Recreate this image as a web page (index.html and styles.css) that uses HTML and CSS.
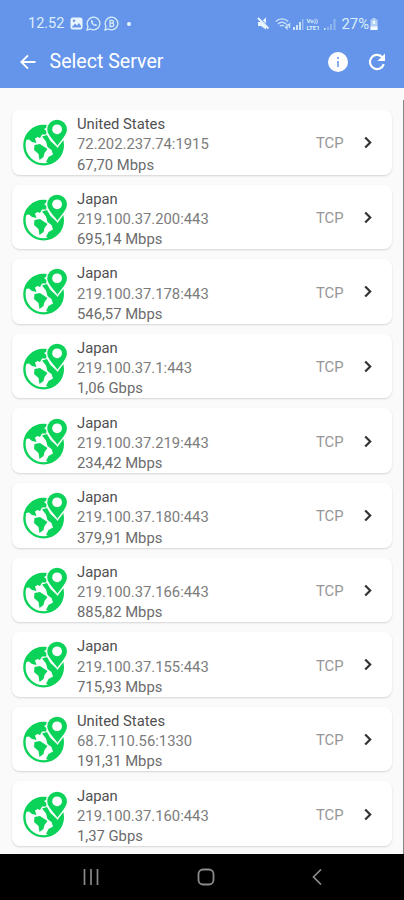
FILE: index.html
```html
<!DOCTYPE html>
<html lang="en">
<head>
    <title>Select Server</title>
    <meta charset="utf-8" />
    <meta name="viewport" content="width=device-width, initial-scale=1" />
    <link rel="stylesheet" href="styles.css">
</head>
<body>
    <svg class="sprite" width="0" height="0">
        <symbol id="globe" viewBox="0 0 46 48">
            <circle cx="21.600" cy="27.200" r="19.200" fill="#fff" stroke="#0bd258" stroke-width="2.400" />
            <path fill="#0bd258" d="M3 22C7 11 14 7.500 23 7.500L26 9L22 11L25 13.500L24 16.500L20 16.500L18 20L15.500 19L13 20.500L14.500 25L10 24L7 21.500Z" />
            <path fill="#0bd258" d="M12.500 27L18 26L25.500 31L22.500 35L21.500 39L17.500 42L16.500 36L12 32Z" />
            <path fill="#0bd258" d="M20 18.500L25 17L28.500 23L34 28L40.500 22C42 33 37 43 28.500 46L24 44L26.500 39L31 36.500L29.500 32L25.500 29L24 23.500Z" />
            <path fill="#0bd258" stroke="#fff" stroke-width="1.300" d="M35.500 28.800C31.500 22.500 24.600 18 24.600 11.500A10.500 10.500 0 0 1 45.600 11.500C45.600 18 39.500 22.500 35.500 28.800Z" />
            <circle cx="35.100" cy="11.300" r="4.900" fill="#fff" />
        </symbol>
        <symbol id="chevron" viewBox="0 0 10 14">
            <path fill="none" stroke="#333" stroke-width="2.200" d="M2.200 2.500L7.200 7.500L2.200 12.500" />
        </symbol>
    </svg>
    <div class="container">
        <header>
            <div class="status-bar">
                <span class="time">12.52</span>
                <svg width="13" height="13" viewBox="0 0 13 13">
                    <rect x="0.500" y="0.500" width="12" height="12" rx="2.500" fill="#e8f5ff" />
                    <path fill="#6b98e6" d="M2 10L5 6.500L7 8.500L9 6L11 9V10.500H2Z" />
                    <circle cx="4" cy="3.800" r="1.200" fill="#6b98e6" />
                </svg>
                <svg width="15" height="15" viewBox="0 0 15 15" fill="none" stroke="#d6ecf8" stroke-width="1.300">
                    <path d="M1 14L2 10.500A6.300 6.300 0 1 1 4.500 13Z" />
                    <path d="M5 4.500C4.500 7.500 7.500 10.500 10.500 10L11 8.700L9.300 8L8.500 8.700L6.500 6.500L7 5.500L6.200 4Z" fill="#d6ecf8" stroke="none" />
                </svg>
                <svg width="15" height="15" viewBox="0 0 15 15" fill="none" stroke="#d6ecf8" stroke-width="1.300">
                    <path d="M1 14L2 10.500A6.300 6.300 0 1 1 4.500 13Z" />
                    <path d="M6 4.300H8C10 4.300 10 7 8 7.200C10.300 7.400 10.300 10.500 8 10.500H6ZM6 7.200H8" />
                </svg>
                <span class="dot"></span>
                <div class="signals">
                    <svg width="12" height="13" viewBox="0 0 12 13">
                        <path fill="#e8f5ff" d="M1 5H4L9 0.500V12.500L4 9H1Z" />
                        <path stroke="#6b98e6" stroke-width="1.200" d="M2 0.500L12 10.500" />
                        <path stroke="#e8f5ff" stroke-width="1.900" d="M1 1L11.500 11.500" />
                    </svg>
                    <svg class="wifi" width="16" height="13" viewBox="0 0 16 13" fill="none" stroke="#cfe6f8" stroke-width="1.300">
                        <path d="M1 4.500C4 1 10 1 13 4.500M3 7C5.500 4.600 8.500 4.600 11 7M5 9C6.500 8 7.500 8 9 9" />
                        <path d="M10 9.500L12 11.500V7M14.500 11V7L13 8.500" />
                    </svg>
                    <svg width="11" height="12" viewBox="0 0 11 12" fill="#cfe6f8">
                        <path d="M0 9H2V12H0ZM3 7H5V12H3ZM6 4H8V12H6Z" />
                        <path d="M9 1H10.500V12H9Z" opacity="0.500" />
                    </svg>
                    <span class="volte"><span>Vo))</span><span>LTE1</span></span>
                    <svg width="13" height="12" viewBox="0 0 13 12" fill="#cfe6f8">
                        <path d="M0 10H1.500V12H0Z" />
                        <path d="M3 9H5V12H3ZM6 6H8V12H6ZM9.500 1H11.500V12H9.500Z" opacity="0.400" />
                    </svg>
                    <span class="battery">27%</span>
                    <svg width="8" height="12" viewBox="0 0 8 12">
                        <path fill="#b5d2f5" d="M2.500 0H5.500V1.500H7.500V12H0.500V1.500H2.500Z" />
                        <path fill="#f2faff" d="M0.500 8.500H7.500V12H0.500ZM3 3H5V6H3Z" />
                    </svg>
                </div>
            </div>
            <div class="toolbar">
                <svg width="16" height="16" viewBox="0 0 16 16" fill="none" stroke="#fff" stroke-width="1.900">
                    <path d="M15.500 8H1.800M8 1.300L1.300 8L8 14.700" />
                </svg>
                <h1>Select Server</h1>
                <svg class="info" width="20" height="20" viewBox="0 0 20 20">
                    <circle cx="10" cy="10" r="10" fill="#fff" />
                    <path fill="#8aaeea" d="M9 5H11V7H9ZM9 9H11V15H9Z" />
                </svg>
                <svg width="18" height="18" viewBox="0 0 18 18">
                    <path fill="none" stroke="#fff" stroke-width="2.200" d="M15.800 11.200A7.100 7.100 0 1 1 13.800 3.700L15 5" />
                    <path fill="#fff" d="M17 0.500V8H9.500Z" />
                </svg>
            </div>
        </header>
        <div class="server-list">
            <div class="server-item">
                <svg class="server-icon"><use href="#globe" /></svg>
                <div class="server-info"><p class="country">United States</p><p>72.202.237.74:1915</p><p class="speed">67,70 Mbps</p></div>
                <span class="protocol">TCP</span>
                <svg class="chevron"><use href="#chevron" /></svg>
            </div>
            <div class="server-item">
                <svg class="server-icon"><use href="#globe" /></svg>
                <div class="server-info"><p class="country">Japan</p><p>219.100.37.200:443</p><p class="speed">695,14 Mbps</p></div>
                <span class="protocol">TCP</span>
                <svg class="chevron"><use href="#chevron" /></svg>
            </div>
            <div class="server-item">
                <svg class="server-icon"><use href="#globe" /></svg>
                <div class="server-info"><p class="country">Japan</p><p>219.100.37.178:443</p><p class="speed">546,57 Mbps</p></div>
                <span class="protocol">TCP</span>
                <svg class="chevron"><use href="#chevron" /></svg>
            </div>
            <div class="server-item">
                <svg class="server-icon"><use href="#globe" /></svg>
                <div class="server-info"><p class="country">Japan</p><p>219.100.37.1:443</p><p class="speed">1,06 Gbps</p></div>
                <span class="protocol">TCP</span>
                <svg class="chevron"><use href="#chevron" /></svg>
            </div>
            <div class="server-item">
                <svg class="server-icon"><use href="#globe" /></svg>
                <div class="server-info"><p class="country">Japan</p><p>219.100.37.219:443</p><p class="speed">234,42 Mbps</p></div>
                <span class="protocol">TCP</span>
                <svg class="chevron"><use href="#chevron" /></svg>
            </div>
            <div class="server-item">
                <svg class="server-icon"><use href="#globe" /></svg>
                <div class="server-info"><p class="country">Japan</p><p>219.100.37.180:443</p><p class="speed">379,91 Mbps</p></div>
                <span class="protocol">TCP</span>
                <svg class="chevron"><use href="#chevron" /></svg>
            </div>
            <div class="server-item">
                <svg class="server-icon"><use href="#globe" /></svg>
                <div class="server-info"><p class="country">Japan</p><p>219.100.37.166:443</p><p class="speed">885,82 Mbps</p></div>
                <span class="protocol">TCP</span>
                <svg class="chevron"><use href="#chevron" /></svg>
            </div>
            <div class="server-item">
                <svg class="server-icon"><use href="#globe" /></svg>
                <div class="server-info"><p class="country">Japan</p><p>219.100.37.155:443</p><p class="speed">715,93 Mbps</p></div>
                <span class="protocol">TCP</span>
                <svg class="chevron"><use href="#chevron" /></svg>
            </div>
            <div class="server-item">
                <svg class="server-icon"><use href="#globe" /></svg>
                <div class="server-info"><p class="country">United States</p><p>68.7.110.56:1330</p><p class="speed">191,31 Mbps</p></div>
                <span class="protocol">TCP</span>
                <svg class="chevron"><use href="#chevron" /></svg>
            </div>
            <div class="server-item">
                <svg class="server-icon"><use href="#globe" /></svg>
                <div class="server-info"><p class="country">Japan</p><p>219.100.37.160:443</p><p class="speed">1,37 Gbps</p></div>
                <span class="protocol">TCP</span>
                <svg class="chevron"><use href="#chevron" /></svg>
            </div>
            <div class="scrollbar"></div>
        </div>
        <nav>
            <svg width="16" height="16" viewBox="0 0 16 16" fill="none" stroke="#8b8b8b" stroke-width="1.700">
                <path d="M1.500 0V16M8 0V16M14.500 0V16" />
            </svg>
            <svg width="18" height="18" viewBox="0 0 18 18" fill="none" stroke="#8b8b8b" stroke-width="1.800">
                <rect x="1.500" y="1.500" width="15" height="15" rx="4.500" />
            </svg>
            <svg width="10" height="16" viewBox="0 0 10 16" fill="none" stroke="#8b8b8b" stroke-width="1.700">
                <path d="M9 0.500L1.500 8L9 15.500" />
            </svg>
        </nav>
    </div>
</body>
</html>
```
FILE: styles.css
```css
body{
    margin:0;
    font-family:Roboto, sans-serif;
}
.sprite{
    position:absolute;
}
.container{
    height:900px;
    display:flex;
    flex-direction:column;
    overflow:hidden;
}
header{
    height:88px;
    box-sizing:border-box;
    padding-top:14px;
    background-color:#6495ea;
    flex-shrink:0;
}
.status-bar{
    height:19px;
    padding:0 26px 0 28px;
    display:flex;
    align-items:center;
    color:#dceefb;
}
.time{
    width:42px;
    font-size:14.5px;
}
.status-bar > svg{
    margin-right:3px;
}
.dot{
    width:4px;
    height:4px;
    margin-left:5px;
    border-radius:50%;
    background-color:#e8f5ff;
}
.signals{
    margin-left:auto;
    display:flex;
    align-items:center;
}
.wifi{
    margin:0 2px 0 6px;
}
.volte{
    width:15px;
    margin:0 2px 0 3px;
    display:flex;
    flex-direction:column;
    font-size:6px;
    line-height:7px;
    font-weight:bold;
}
.battery{
    margin:0 1px 0 5px;
    font-size:14.8px;
}
.toolbar{
    height:57px;
    padding:0 18px 0 20px;
    display:flex;
    align-items:center;
    color:#fff;
}
.toolbar h1{
    margin:0 auto 0 13.5px;
    font-size:19.6px;
    font-weight:normal;
}
.info{
    margin-right:20px;
}
.server-list{
    flex:1;
    min-height:0;
    padding:22px 12px 0;
    background-color:#fafafa;
    position:relative;
    overflow:hidden;
}
.server-item{
    height:64.600px;
    margin-bottom:10px;
    padding:0 19px 0 10px;
    box-sizing:border-box;
    display:flex;
    align-items:center;
    background-color:#fff;
    border-radius:8px;
    box-shadow:0 1px 2px rgba(0,0,0,0.15);
}
    .server-icon{
        width:46px;
        height:48px;
        margin-right:9px;
    }
    .server-info{
        flex:1;
        margin-top:4.4px;
        font-size:14.8px;
        color:#7c7c7c;
    }
    .server-info p{
        margin:0;
        line-height:20.2px;
    }
    .server-info .country{
        color:#505050;
    }
    .server-info .speed{
        color:#6c6c6c;
    }
    .protocol{
        margin:2.4px 19.5px 0 0;
        font-size:14.8px;
        color:#969696;
    }
    .chevron{
        width:10px;
        height:14px;
    }
.scrollbar{
    position:absolute;
    top:12px;
    right:0;
    bottom:0;
    width:1px;
    background-color:#858585;
}
nav{
    height:46px;
    padding:0 82px 0 83px;
    display:flex;
    align-items:center;
    justify-content:space-between;
    background-color:#000;
    flex-shrink:0;
}
```
